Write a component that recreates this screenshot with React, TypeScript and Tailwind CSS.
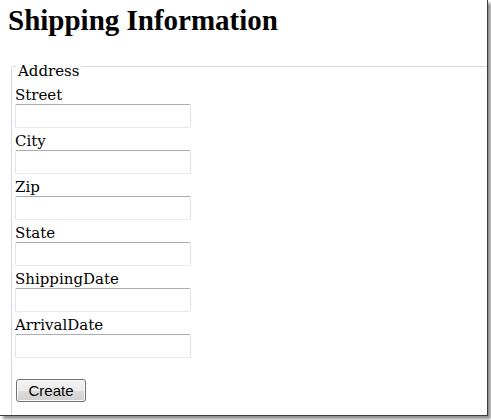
import React from 'react';

const fields = ['Street', 'City', 'Zip', 'State', 'ShippingDate', 'ArrivalDate'];

export default function App() {
  return (
    <div className="w-[491px] h-[420px] bg-white overflow-hidden">
      {/* screenshot frame with drop shadow */}
      <div className="relative w-[488px] h-[416px] overflow-hidden bg-white border-r border-b border-[#3c3c3c] shadow-[3px_3px_3px_rgba(0,0,0,0.45)] font-['DejaVu_Serif',serif] text-black">
        <h1 className="pl-[8px] pt-[4px] h-[52px] font-['Liberation_Serif',serif] text-[29px] leading-[33px] font-bold">
          Shipping Information
        </h1>

        <fieldset className="ml-[11px] w-[500px] h-[420px] border border-[#cfd9e3] rounded-[3px] pl-[3px]">
          <legend className="ml-[1px] px-[2px] pt-[10px] text-[15px] leading-[18px]">Address</legend>

          <div className="pt-[6px] flex flex-col">
            {fields.map((f, i) => (
              <div key={f} className="flex flex-col">
                <label className={`text-[15px] leading-[18px] ${i === 0 ? '' : 'pt-[4px]'}`}>{f}</label>
                <input
                  type="text"
                  className="w-[176px] h-[24px] rounded-[2px] border border-[#e2e3ea] border-t-[#abadb3] border-b-[#e3e9ef] bg-white outline-none"
                />
              </div>
            ))}
          </div>

          <div className="pt-[21px]">
            <button className="ml-[1px] w-[70px] h-[23px] rounded-[3px] border border-[#707070] bg-[linear-gradient(#f2f2f2_0%,#ebebeb_50%,#dddddd_51%,#cfcfcf_100%)] shadow-[inset_0_0_0_1px_#fcfcfc] font-['Liberation_Sans',Arial,sans-serif] text-[15px] leading-[19px] text-black">
              Create
            </button>
          </div>
        </fieldset>
      </div>
    </div>
  );
}
